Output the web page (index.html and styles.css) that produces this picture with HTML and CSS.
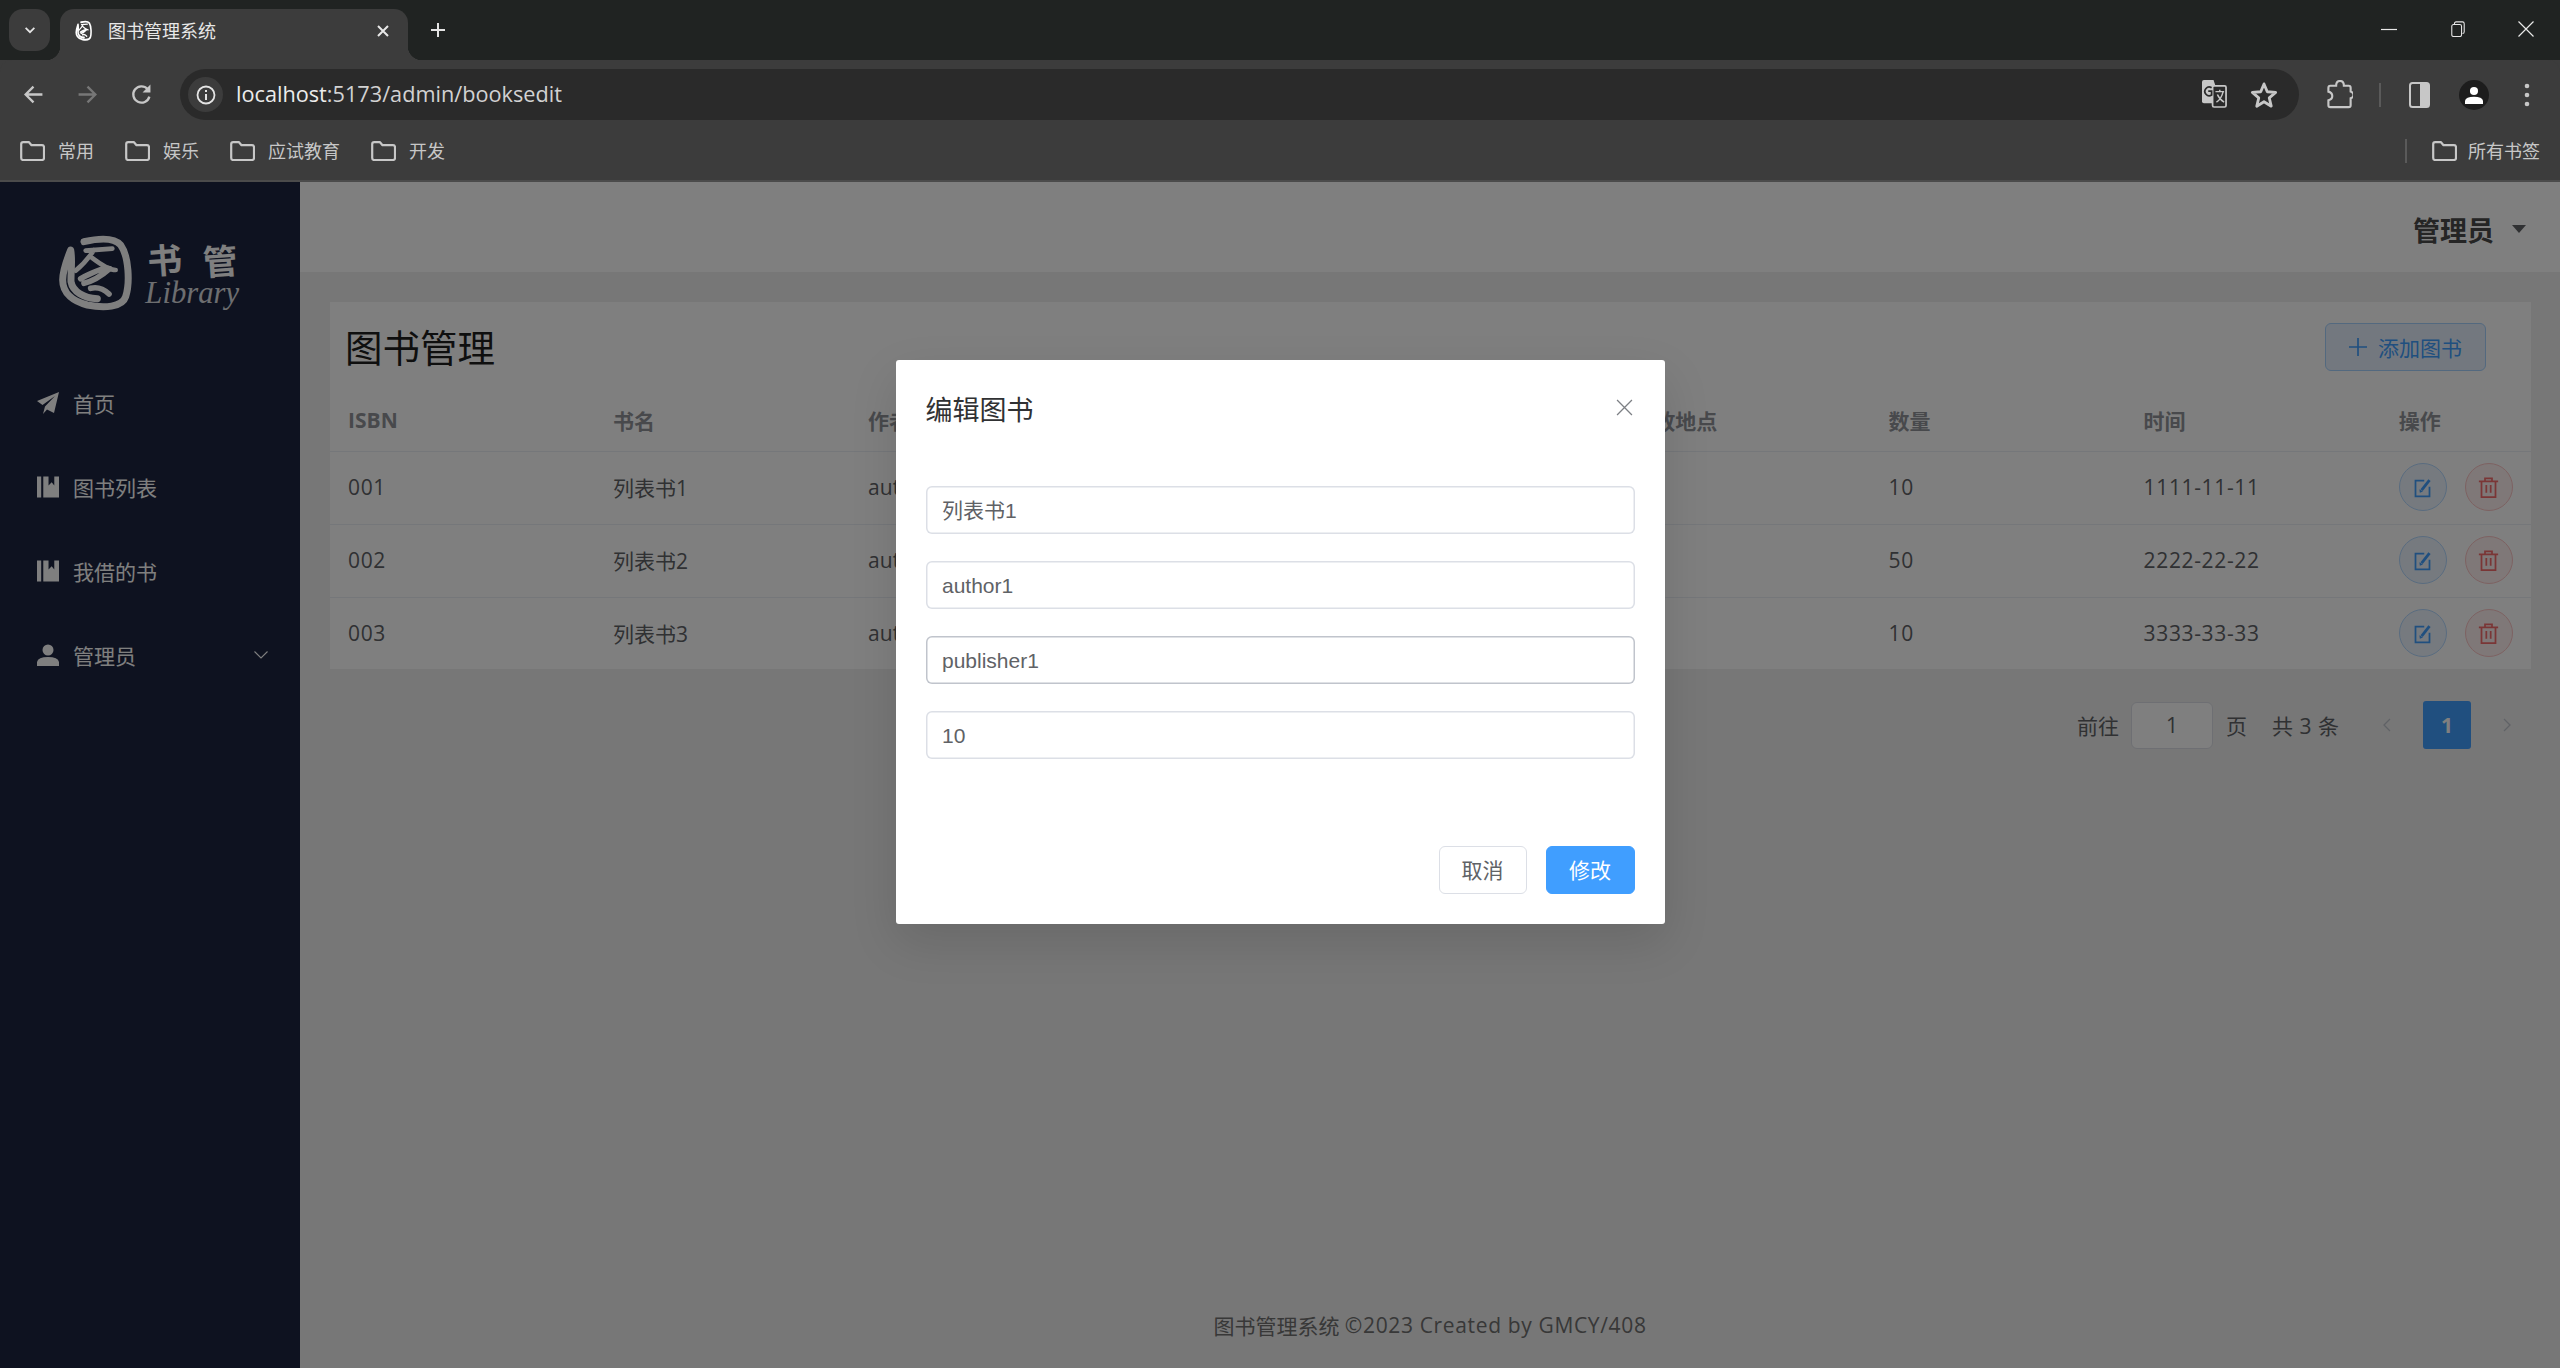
FILE: index.html
```html
<!DOCTYPE html>
<html lang="zh-CN">
<head>
<meta charset="utf-8">
<title>图书管理系统</title>
<link rel="stylesheet" href="styles.css">
</head>
<body>
<svg class="defs" width="0" height="0">
  <symbol id="emblem" viewBox="50 40 225 235" preserveAspectRatio="none">
    <g fill="none" stroke="currentColor" stroke-linecap="round" stroke-linejoin="round">
      <path stroke-width="21" d="M130 65C170 56 220 52 240 75C265 110 268 190 255 230C245 262 190 265 140 255C100 245 66 222 66 180C66 150 80 115 90 90C96 120 90 160 91 185C96 215 130 235 170 236"/>
      <path stroke-width="14" d="M135 92L215 86M160 90C140 120 120 140 105 152M150 110C170 125 200 150 225 150"/>
      <path stroke-width="17" d="M120 176C150 160 190 140 207 146C180 170 150 185 130 190M150 205C170 200 190 208 205 222"/>
    </g>
  </symbol>
  <symbol id="folder" viewBox="0 0 25 20">
    <path fill="none" stroke="currentColor" stroke-width="2.2" stroke-linejoin="round" d="M1.2 3.2Q1.2 1.2 3.2 1.2H9L11.5 4.2H22Q24 4.2 24 6.2V17Q24 19 22 19H3.2Q1.2 19 1.2 17Z"/>
  </symbol>
  <symbol id="book" viewBox="0 0 21 20">
    <path fill="currentColor" d="M0 0H4V20H0ZM6 0H11V8.5L14 5.5L16.500 8.500V0H21V20H6Z"/>
  </symbol>
  <symbol id="edit" viewBox="0 0 24 24">
    <path fill="none" stroke="currentColor" stroke-width="2" d="M14 4H4V22H20V11"/>
    <path fill="none" stroke="currentColor" stroke-width="3.200" d="M11 15L20 3.500"/>
    <path fill="currentColor" d="M8.500 14L9 18L12.500 16.500Z"/>
  </symbol>
  <symbol id="trash" viewBox="0 0 24 24">
    <path fill="none" stroke="currentColor" stroke-width="2" d="M1 5H23M8 5V1.500H16V5M4 5V23H20V5M9.500 9V18M14.500 9V18"/>
  </symbol>
</svg>

<header class="tabstrip">
  <button class="tab-search"><svg viewBox="0 0 16 16" class="i14"><path d="M3 5.500L8 10.500L13 5.500" fill="none" stroke="currentColor" stroke-width="2"/></svg></button>
  <div class="tab">
    <svg class="favicon"><use href="#emblem"/></svg>
    <span class="tab-title">图书管理系统</span>
    <svg viewBox="0 0 14 14" class="i14"><path d="M2 2L12 12M12 2L2 12" stroke="currentColor" stroke-width="2"/></svg>
  </div>
  <svg viewBox="0 0 16 16" class="newtab"><path d="M8 1V15M1 8H15" stroke="currentColor" stroke-width="2"/></svg>
  <div class="win-controls">
    <svg viewBox="0 0 16 16"><path d="M0 8.500H16" stroke="currentColor" stroke-width="1.200"/></svg>
    <svg viewBox="0 0 16 18"><path fill="none" stroke="currentColor" stroke-width="1.200" d="M4 3.500V3Q4 1 6 1H13Q15 1 15 3V12Q15 14 13 14"/><rect x="1" y="4" width="11" height="13.500" rx="2" fill="none" stroke="currentColor" stroke-width="1.200"/></svg>
    <svg viewBox="0 0 16 16"><path d="M0.500 0.500L15.500 15.500M15.500 0.500L0.500 15.500" stroke="currentColor" stroke-width="1.200"/></svg>
  </div>
</header>

<nav class="toolbar">
  <svg viewBox="0 0 20 20" class="nav-icon"><path d="M18.500 10H3M10 2.500L2.500 10L10 17.500" fill="none" stroke="currentColor" stroke-width="2.200"/></svg>
  <svg viewBox="0 0 20 20" class="nav-icon disabled"><path d="M1.500 10H17M10 2.500L17.500 10L10 17.500" fill="none" stroke="currentColor" stroke-width="2.200"/></svg>
  <svg viewBox="0 0 20 20" class="nav-icon reload"><path d="M17.500 12A7.800 7.800 0 1 1 15.800 4.800" fill="none" stroke="currentColor" stroke-width="2.200"/><path d="M18.500 0.500V8H11Z" fill="currentColor"/></svg>
  <div class="omnibox">
    <span class="site-info"><svg viewBox="0 0 20 20"><circle cx="10" cy="10" r="8.500" fill="none" stroke="currentColor" stroke-width="1.800"/><path d="M10 9V15M10 5V7" stroke="currentColor" stroke-width="2"/></svg></span>
    <span class="url">localhost<span class="url-rest">:5173/admin/booksedit</span></span>
    <svg viewBox="0 0 26 30" class="translate"><path d="M2 0H12L20 24H2Q0 24 0 22V2Q0 0 2 0Z" fill="currentColor"/><rect x="11" y="6" width="14" height="22" rx="1.500" fill="#2a2a2a" stroke="currentColor" stroke-width="1.800"/><path d="M14 12H23M18.500 10V12M22 12Q20 20 15 23M16 15Q18 20 23 23" fill="none" stroke="currentColor" stroke-width="1.500"/><path d="M10 8A4.500 4.500 0 1 0 10 15.500V11.500H6.500" fill="none" stroke="#2a2a2a" stroke-width="1.800"/></svg>
    <svg viewBox="0 0 24 24" class="star"><path d="M12 2.500L14.800 9.200L22 9.800L16.500 14.500L18.200 21.600L12 17.800L5.800 21.600L7.500 14.500L2 9.800L9.200 9.200Z" fill="none" stroke="currentColor" stroke-width="2.400" stroke-linejoin="round"/></svg>
  </div>
  <div class="tool-right">
    <svg viewBox="0 0 26 30" class="ext"><path d="M3 6H9Q9 1 13 1Q17 1 17 6H22Q24 6 24 8V12Q27 13 27 15.500Q27 18 24 19V26Q24 28 22 28H3Q1 28 1 26V21Q5 20 5 16.500Q5 13 1 12V8Q1 6 3 6Z" fill="none" stroke="currentColor" stroke-width="2.200"/></svg>
    <span class="tool-sep"></span>
    <svg viewBox="0 0 21 26" class="panel"><rect x="1" y="1" width="19" height="24" rx="2.500" fill="none" stroke="currentColor" stroke-width="2"/><rect x="11" y="1" width="9" height="24" fill="currentColor"/></svg>
    <span class="avatar"><svg viewBox="0 0 20 20"><circle cx="10" cy="5.500" r="4.500" fill="#fff"/><path d="M0 20V16.500Q1 12 10 12Q19 12 20 16.500V20Z" fill="#fff"/></svg></span>
    <svg viewBox="0 0 6 26" class="dots"><circle cx="3" cy="4" r="2.300" fill="currentColor"/><circle cx="3" cy="13" r="2.300" fill="currentColor"/><circle cx="3" cy="22" r="2.300" fill="currentColor"/></svg>
  </div>
</nav>

<div class="bookmarks">
  <a class="bm"><svg><use href="#folder"/></svg>常用</a>
  <a class="bm"><svg><use href="#folder"/></svg>娱乐</a>
  <a class="bm"><svg><use href="#folder"/></svg>应试教育</a>
  <a class="bm"><svg><use href="#folder"/></svg>开发</a>
  <span class="bm-sep"></span>
  <a class="bm bm-all"><svg><use href="#folder"/></svg>所有书签</a>
</div>

<div class="app">
  <aside class="sidebar">
    <svg class="logo" viewBox="0 0 660 300">
      <use href="#emblem" x="52" y="40" width="225" height="235"/>
      <text class="logo-cn" x="322" y="160" transform="rotate(-4 375 120)">书</text>
      <text class="logo-cn" x="488" y="163" transform="rotate(-4 540 120)">管</text>
      <text class="logo-en" x="316" y="250">Library</text>
    </svg>
    <ul class="menu">
      <li class="menu-item">
        <svg viewBox="0 0 22 22"><path d="M22 0L0 9L5.500 13L18 4L8 14.500L6 22L10 17.500L17 21Z" fill="currentColor"/></svg>
        <span>首页</span>
      </li>
      <li class="menu-item"><svg><use href="#book"/></svg><span>图书列表</span></li>
      <li class="menu-item"><svg><use href="#book"/></svg><span>我借的书</span></li>
      <li class="menu-item">
        <svg viewBox="0 0 22 22"><circle cx="11" cy="6" r="5.500" fill="currentColor"/><path d="M0 22V18Q1 13 11 13Q21 13 22 18V22Z" fill="currentColor"/></svg>
        <span>管理员</span>
        <svg viewBox="0 0 14 8" class="chev"><path d="M0.500 0.500L7 7L13.500 0.500" fill="none" stroke="currentColor" stroke-width="1.100"/></svg>
      </li>
    </ul>
  </aside>

  <main class="main">
    <div class="topbar">
      <span class="user">管理员</span>
      <span class="caret"></span>
    </div>
    <div class="content">
      <section class="card">
        <div class="card-head">
          <h1>图书管理</h1>
          <button class="add-btn"><svg viewBox="0 0 18 18"><path d="M9 0V18M0 9H18" stroke="currentColor" stroke-width="1.700"/></svg>添加图书</button>
        </div>
        <table class="books">
          <colgroup>
            <col class="c-first"><col class="c"><col class="c"><col class="c"><col class="c"><col class="c"><col class="c"><col class="c"><col>
          </colgroup>
          <thead>
            <tr><th>ISBN</th><th>书名</th><th>作者</th><th></th><th></th><th>存放地点</th><th>数量</th><th>时间</th><th>操作</th></tr>
          </thead>
          <tbody>
            <tr><td class="num">001</td><td>列表书1</td><td>author1</td><td></td><td></td><td></td><td class="num">10</td><td class="num">1111-11-11</td>
              <td><div class="ops"><button class="op op-edit"><svg><use href="#edit"/></svg></button><button class="op op-del"><svg><use href="#trash"/></svg></button></div></td></tr>
            <tr><td class="num">002</td><td>列表书2</td><td>author2</td><td></td><td></td><td></td><td class="num">50</td><td class="num">2222-22-22</td>
              <td><div class="ops"><button class="op op-edit"><svg><use href="#edit"/></svg></button><button class="op op-del"><svg><use href="#trash"/></svg></button></div></td></tr>
            <tr><td class="num">003</td><td>列表书3</td><td>author3</td><td></td><td></td><td></td><td class="num">10</td><td class="num">3333-33-33</td>
              <td><div class="ops"><button class="op op-edit"><svg><use href="#edit"/></svg></button><button class="op op-del"><svg><use href="#trash"/></svg></button></div></td></tr>
          </tbody>
        </table>
      </section>
      <div class="pager">
        <span>前往</span>
        <span class="pager-input">1</span>
        <span>页</span>
        <span class="pager-total">共 3 条</span>
        <span class="pager-btn"><svg viewBox="0 0 8 14"><path d="M7 1L1 7L7 13" fill="none" stroke="currentColor" stroke-width="1.300"/></svg></span>
        <span class="pager-btn active">1</span>
        <span class="pager-btn"><svg viewBox="0 0 8 14"><path d="M1 1L7 7L1 13" fill="none" stroke="currentColor" stroke-width="1.300"/></svg></span>
      </div>
    </div>
    <footer class="foot"><span>图书管理系统&nbsp;</span><span class="foot-latin">©2023 Created by GMCY/408</span></footer>
  </main>

  <div class="overlay">
    <div class="dialog">
      <div class="dialog-head">
        <span class="dialog-title">编辑图书</span>
        <svg viewBox="0 0 16 16" class="dialog-close"><path d="M1 1L15 15M15 1L1 15" stroke="currentColor" stroke-width="1.200"/></svg>
      </div>
      <form class="dialog-form">
        <input class="field field-cjk" type="text" value="列表书1">
        <input class="field" type="text" value="author1">
        <input class="field focused" type="text" value="publisher1">
        <input class="field" type="text" value="10">
      </form>
      <div class="dialog-foot">
        <button class="btn">取消</button>
        <button class="btn primary">修改</button>
      </div>
    </div>
  </div>
</div>
</body>
</html>
```
FILE: styles.css
```css
* { box-sizing: border-box; }
html, body { margin: 0; height: 100%; }
body {
  width: 2560px;
  height: 1368px;
  overflow: hidden;
  display: flex;
  flex-direction: column;
  background: #3c3c3c;
  font-family: "Open Sans", "Noto Sans CJK SC", sans-serif;
  font-size: 21px;
}
svg { display: block; flex: none; }
.defs { position: absolute; }
button { font-family: inherit; cursor: pointer; }
ul { list-style: none; margin: 0; padding: 0; }

/* browser chrome */
.tabstrip {
  height: 60px;
  flex: none;
  display: flex;
  align-items: flex-start;
  padding: 9px 0 0 9px;
  background: #202322;
  color: #e4e4e4;
}
.tab-search {
  width: 41px;
  height: 42px;
  border: 0;
  border-radius: 14px;
  background: #3c3c3c;
  color: #e4e4e4;
  display: flex;
  align-items: center;
  justify-content: center;
  padding: 0;
}
.i14 { width: 14px; height: 14px; }
.tab {
  position: relative;
  width: 348px;
  height: 51px;
  margin-left: 10px;
  padding: 0 18px 8px 15px;
  display: flex;
  align-items: center;
  background: #3c3c3c;
  border-radius: 14px 14px 0 0;
  color: #e8e8e8;
}
.tab::before, .tab::after {
  content: "";
  position: absolute;
  bottom: 0;
  width: 14px;
  height: 14px;
}
.tab::before { left: -14px; background: radial-gradient(circle at 0 0, transparent 14px, #3c3c3c 14.500px); }
.tab::after { right: -14px; background: radial-gradient(circle at 100% 0, transparent 14px, #3c3c3c 14.500px); }
.favicon { width: 17px; height: 21px; color: #fff; margin-right: 16px; }
.tab-title { flex: 1; font-size: 18px; line-height: 24px; }
.newtab { width: 16px; height: 16px; margin: 13px 0 0 22px; }
.win-controls {
  margin-left: auto;
  width: 179px;
  height: 42px;
  display: flex;
  align-items: center;
  gap: 52.500px;
  color: #e8e8e8;
  padding-bottom: 2px;
}
.win-controls svg { width: 16px; height: 16px; }

.toolbar {
  height: 72px;
  flex: none;
  display: flex;
  align-items: flex-start;
  padding: 9px 0 0 23px;
  background: #3c3c3c;
  color: #c7c7c7;
  border-top-left-radius: 12px;
  border-top-right-radius: 12px;
}
.nav-icon { width: 21px; height: 21px; margin: 15px 33px 0 0; }
.nav-icon.disabled { color: #777; }
.nav-icon.reload { margin-right: 28px; }
.omnibox {
  width: 2119px;
  height: 51px;
  display: flex;
  align-items: center;
  background: #2a2a2a;
  border-radius: 26px;
  padding-left: 8px;
}
.site-info {
  width: 35px;
  height: 35px;
  border-radius: 50%;
  background: #3c3c3c;
  color: #e4e4e4;
  display: flex;
  align-items: center;
  justify-content: center;
}
.site-info svg { width: 20px; height: 20px; }
.url { flex: 1; margin-left: 13px; padding-bottom: 2px; font-size: 21.700px; color: #ececec; }
.url-rest { color: #d2d2d2; }
.translate { width: 25px; height: 29px; margin-right: 23px; }
.star { width: 28px; height: 28px; margin-right: 21px; }
.tool-right { display: flex; align-items: center; height: 51px; margin-left: 28px; }
.ext { width: 26px; height: 29px; }
.tool-sep { width: 2px; height: 24px; margin: 0 28px 0 26px; background: #5a5a5a; }
.panel { width: 21px; height: 26px; }
.avatar {
  width: 30px;
  height: 30px;
  margin-left: 29px;
  border-radius: 50%;
  background: #1d1d1d;
  display: flex;
  align-items: center;
  justify-content: center;
}
.avatar svg { width: 18px; height: 20px; }
.dots { width: 6px; height: 26px; margin-left: 35px; }

.bookmarks {
  height: 50px;
  flex: none;
  display: flex;
  align-items: center;
  padding: 0 20px 10px 20px;
  background: #3c3c3c;
  border-bottom: 2px solid #4b4b4b;
  color: #c7c7c7;
  font-size: 18px;
}
.bm { display: flex; align-items: center; gap: 13px; margin-right: 31px; line-height: 24px; }
.bm svg { width: 25px; height: 20px; }
.bm-sep { width: 2px; height: 24px; margin-left: auto; margin-right: 25px; background: #5a5a5a; }
.bm-all { margin-right: 0; gap: 11px; }

/* application */
.app { position: relative; flex: 1; display: flex; min-height: 0; }
.sidebar { width: 300px; flex: none; background: #1c2440; padding-top: 38px; color: #fff; }
.logo { width: 220px; height: 100px; margin-left: 40px; color: #fff; }
.logo-cn { font-family: "Noto Sans CJK SC", sans-serif; font-size: 104px; font-weight: 700; fill: #fff; }
.logo-en { font-family: "Liberation Serif", serif; font-style: italic; font-size: 92px; fill: #fff; fill-opacity: .85; }
.menu { margin-top: 41px; }
.menu-item {
  height: 84px;
  display: flex;
  align-items: center;
  padding-left: 37px;
  gap: 14px;
}
.menu-item svg { width: 22px; height: 22px; }
.menu-item .chev { width: 14px; height: 8px; margin-left: auto; margin-right: 32px; }

.main { flex: 1; min-width: 0; display: flex; flex-direction: column; background: #efefef; }
.topbar {
  height: 90px;
  flex: none;
  display: flex;
  align-items: center;
  justify-content: flex-end;
  padding: 4px 34px 0 0;
  background: #fff;
}
.user { font-size: 27px; font-weight: 700; color: #4a4a4a; }
.caret {
  width: 0;
  height: 0;
  margin-left: 18px;
  border: 7px solid transparent;
  border-top: 8px solid #606266;
  border-bottom: 0;
}
.content { flex: 1; padding: 30px 29px 0 30px; min-height: 0; }
.card { background: #fff; height: 367px; }
.card-head {
  display: flex;
  align-items: flex-start;
  justify-content: space-between;
  padding: 21px 45px 0 15px;
  height: 88px;
}
h1 { margin: 0; font-size: 37.500px; line-height: 50px; font-weight: 400; color: #1f1f1f; }
.add-btn {
  width: 161px;
  height: 48px;
  display: flex;
  align-items: center;
  justify-content: center;
  gap: 11px;
  padding: 0;
  font-size: 21px;
  color: #409eff;
  background: #e6f1ff;
  border: 1.500px solid #a6d2ff;
  border-radius: 6px;
}
.add-btn svg { width: 18px; height: 18px; }

.books { width: 2201px; table-layout: fixed; border-collapse: collapse; color: #606266; }
.c-first { width: 264px; }
.c { width: 255.100px; }
.books th {
  height: 61px;
  padding: 0 0 0 19px;
  text-align: left;
  font-weight: 700;
  color: #909399;
  border-bottom: 1.500px solid #ebeef5;
}
.books td {
  height: 73px;
  padding: 0 0 1px 19px;
  border-bottom: 1.500px solid #ebeef5;
}
.books th:first-child, .books td:first-child { padding-left: 18px; }
.books .num { letter-spacing: 0.650px; }
.books tbody tr:last-child td { border-bottom: 0; }
.ops { display: flex; gap: 18px; }
.op {
  width: 48px;
  height: 48px;
  border-radius: 50%;
  padding: 0;
  display: flex;
  align-items: center;
  justify-content: center;
  border: 1.500px solid;
}
.op svg { width: 21px; height: 21px; }
.op-edit { color: #409eff; background: #ecf5ff; border-color: #b3d8ff; }
.op-del { color: #f56c6c; background: #fef0f0; border-color: #fbc4c4; }

.pager { display: flex; align-items: center; justify-content: flex-end; margin-top: 32px; height: 48px; color: #606266; }
.pager-input {
  width: 82px;
  height: 47px;
  margin: 0 13px 0 12px;
  display: flex;
  align-items: center;
  justify-content: center;
  border: 1.500px solid #dcdfe6;
  border-radius: 6px;
  background: #fff;
}
.pager-total { margin: 0 24px 0 25px; word-spacing: 1px; }
.pager-btn {
  width: 48px;
  height: 48px;
  display: flex;
  align-items: center;
  justify-content: center;
  color: #c0c4cc;
  border-radius: 3px;
}
.pager-btn + .pager-btn { margin-left: 12px; }
.pager-btn svg { width: 8px; height: 14px; }
.pager-btn.active { background: #409eff; color: #fff; font-weight: 700; }

.foot {
  height: 86px;
  flex: none;
  display: flex;
  align-items: center;
  justify-content: center;
  color: #707070;
}
.foot-latin { letter-spacing: 0.650px; }

.overlay {
  position: absolute;
  inset: 0;
  display: flex;
  justify-content: center;
  align-items: flex-start;
  padding-top: 178px;
  background: rgba(0, 0, 0, .5);
}
.dialog {
  width: 769px;
  height: 564px;
  padding: 30px;
  background: #fff;
  border-radius: 3px;
  box-shadow: 0 18px 48px rgba(0, 0, 0, .12);
  font-family: "Liberation Sans", "Noto Sans CJK SC", sans-serif;
  color: #606266;
}
.dialog-head { display: flex; align-items: center; justify-content: space-between; height: 36px; padding-top: 5px; }
.dialog-title { font-size: 27px; line-height: 36px; color: #303133; }
.dialog-close { width: 17px; height: 17px; margin-right: 2px; margin-top: -6px; color: #7d8085; }
.dialog-form { display: flex; flex-direction: column; gap: 27px; margin-top: 60px; }
.field {
  display: block;
  width: 100%;
  height: 48px;
  padding: 1px 16.500px 0;
  border: 0;
  outline: 0;
  border-radius: 6px;
  box-shadow: inset 0 0 0 1.500px #dcdfe6;
  font: inherit;
  font-size: 21px;
  color: #606266;
  background: #fff;
}
.field-cjk { padding: 0 16.500px 2px; }
.field.focused { box-shadow: inset 0 0 0 1.500px #c0c4cc; }
.dialog-foot { display: flex; justify-content: flex-end; gap: 19px; margin-top: 87px; }
.btn {
  width: 88px;
  height: 48px;
  padding: 0 0 2px;
  font: inherit;
  font-size: 21px;
  color: #606266;
  background: #fff;
  border: 1.500px solid #dcdfe6;
  border-radius: 6px;
}
.btn.primary { width: 89px; color: #fff; background: #409eff; border-color: #409eff; }
```
